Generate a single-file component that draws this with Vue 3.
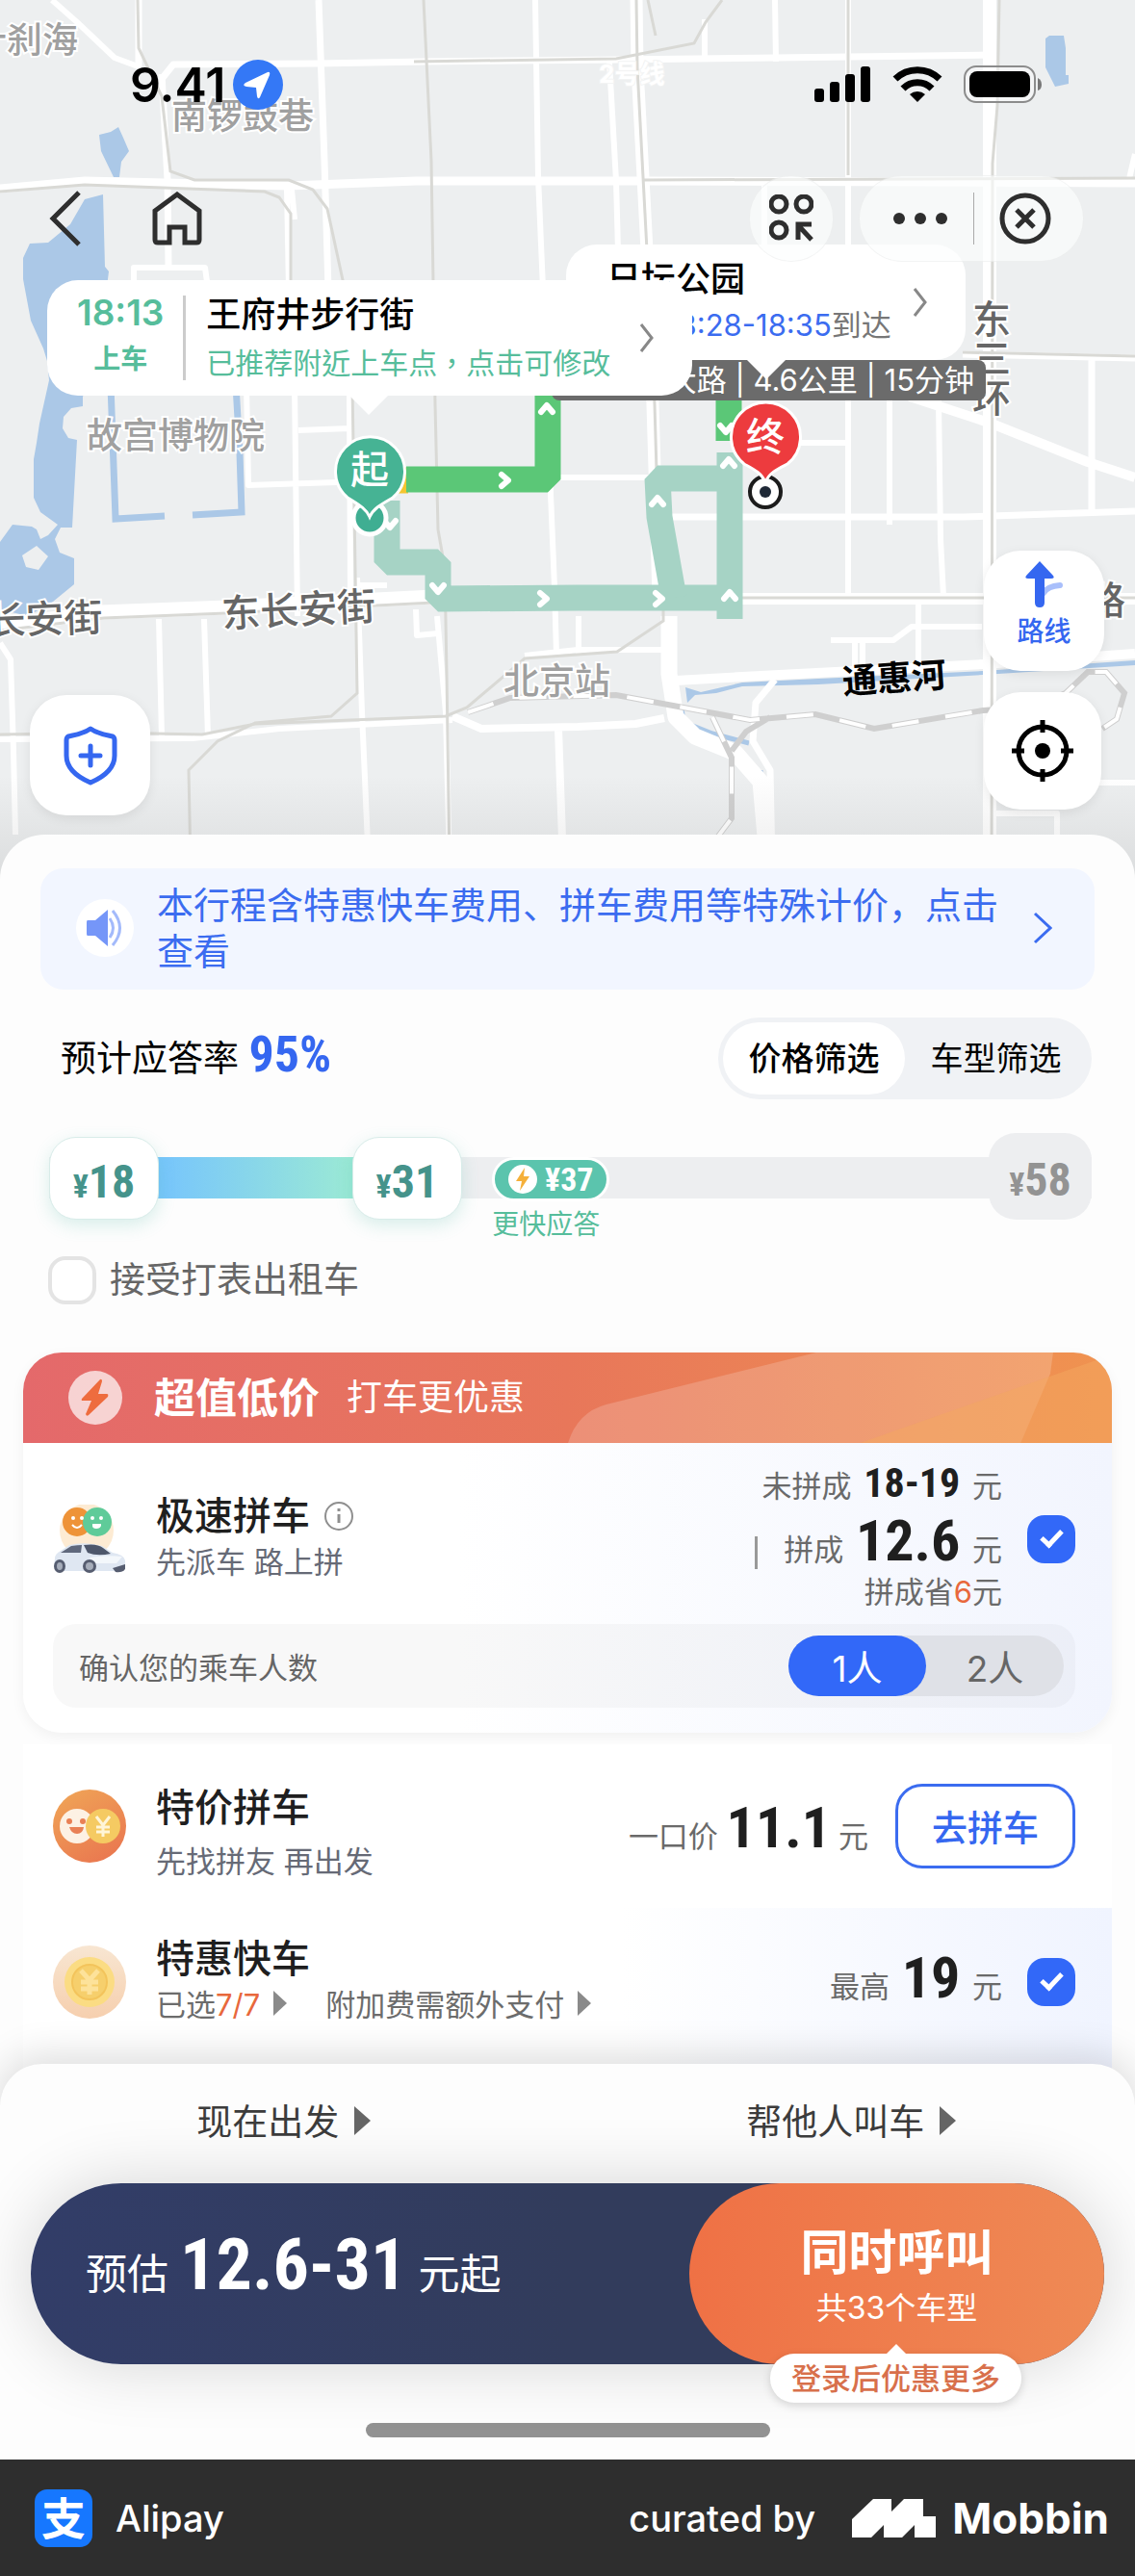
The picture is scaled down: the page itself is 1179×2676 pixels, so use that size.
<template>
  <div class="page">
    <section class="map-area">
      <svg class="map" viewBox="0 0 1179 916" preserveAspectRatio="xMidYMin slice" role="img" aria-label="路线地图">
        <rect width="1179" height="916" fill="#edeff0" />

        <!-- water -->
        <g fill="#abc8e7">
          <path d="M103 140 115 137 123 132 128 143 134 157 126 168 124 184 118 184 105 157Z" />
          <path d="M107 202 88 207 73 233 50 252 31 253 24 268V290L32 333 45 362 49 375 51 395 41 440 38 460 35 477V517L42 532 60 545 50 556 42 560 38 550 33 547 13 545 0 563V633L29 640 55 625 77 607V580L62 574 57 560 63 548H75L80 457 71 455 65 445 66 433 74 424 86 422V412L100 380 112 290 113 282 109 277Z" />
          <path d="M1086 40 1090 37H1105L1107 50V78H1110V87L1096 90 1086 70Z" />
          <path d="M712 714 728 719 771 709 850 705 1021 697 1179 686V691L1021 701 850 711 771 713 744 720 722 722 714 730Z" />
        </g>
        <path d="M23 577 38 567 50 578 40 592 27 589Z" fill="#edeff0" />
        <g fill="none" stroke="#abc8e7" stroke-width="7">
          <path d="M115 400 120 539 171 536" />
          <path d="M200 535 251 532 249 470 245 400" />
          <path d="M708 735 710 750 740 762 778 772M790 800 791 870" stroke-width="5" />
        </g>

        <!-- streets -->
        <g fill="none" stroke="#fff" stroke-width="6" stroke-linejoin="round">
          <path d="M54 0 80 23 119 60 146 70" />
          <path d="M144 0V70M168 77 174 187 175 277" stroke-width="7" />
          <path d="M168 82 180 67 330 66 440 64 640 62 806 60 1028 57" stroke-width="7" />
          <path d="M331 0 337 167 341 300" stroke-width="7" />
          <path d="M556 0 559 183 564 300" />
          <path d="M0 196 88 188 300 193 432 188H670L1179 190" stroke-width="9" />
          <path d="M303 197 306 228M298 197 300 300M139 300V278H213L216 300" />
          <path d="M256 400 258 504 350 501M306 400 309 640M310 447 363 445M363 411 364 620" />
          <path d="M165 643 168 765M212 643 216 765M0 668 11 685 14 780 16 867" />
          <path d="M0 768 200 767 290 757 470 748M432 633 433 660 455 658" />
          <path d="M371 600 376 740 383 900M454 640 463 740 467 900" />
          <path d="M570 400 572 513 576 610 578 680M560 496H680M370 608H402" />
          <path d="M470 744 500 757 600 755 660 752 690 746M580 757 585 900" stroke-width="8" />
          <path d="M545 681 600 675 690 675M601 640V680" />
          <path d="M633 65 640 188 642 260M732 20V62M805 0 806 64M794 193V260M881 193V620" />
          <path d="M881 0V186M830 460H881M924 416V545M975 416 977 560 980 620" />
          <path d="M690 537 1000 537 1179 531M1134 373V533M1000 368 1179 372" stroke-width="7" />
          <path d="M945 412 1030 440 1130 480 1179 496" stroke-width="10" />
          <path d="M661 0 662 70 672 260 678 420 684 620" stroke-width="13" />
          <path d="M1028 0V916" stroke-width="14" />
          <path d="M863 665H928L947 651H1020M954 625V695M888 665V695M896 665V695" />
          <path d="M695 640V700L702 745 722 765 764 782 790 812 796 880" stroke-width="17" />
          <path d="M702 707 790 702 1021 690 1179 679" stroke-width="10" />
          <path d="M805 706 785 730 782 770 800 800 802 900" stroke-width="7" />
          <path d="M1098 813H1179M1035 845H1098V900M1172 190 1179 160" />
          <path d="M771 622H1179" stroke-width="12" />
          <path d="M0 650 105 636 235 631 450 620" stroke-width="15" />
        </g>

        <!-- railway -->
        <path d="M486 740 530 725 640 722 710 735 779 748 847 742 908 757 1021 738 1070 735 1107 720 1130 698H1149L1168 720 1160 747 1145 757M740 745 760 787V850L745 870M760 780 775 760 800 745" fill="none" stroke="#cfcfcf" stroke-width="6" />
        <path d="M486 740 530 725 640 722 710 735 779 748 847 742 908 757 1021 738 1070 735 1107 720 1130 698H1149L1168 720 1160 747 1145 757M740 745 760 787V850L745 870" fill="none" stroke="#fff" stroke-width="4" stroke-dasharray="28 28" />

        <!-- subway lines -->
        <g fill="none" stroke="#d9d9d5" stroke-width="3">
          <path d="M143 0 144 50 168 100 177 178 202 187H300L325 197 340 217 358 300" />
          <path d="M0 199 88 192 275 199 290 205 302 222V300" />
          <path d="M430 64 640 61 721 45 733 23 750 0M673 0 681 37" />
          <path d="M440 0 448 167 452 420 455 550 462 590 464 700 467 900" />
          <path d="M366 400 371 720 344 744 265 751 226 770 196 800 198 900" />
          <path d="M0 763 110 761 210 763 265 752 463 744 485 735 545 684 641 677 689 645V610" />
          <path d="M0 655 108 642 235 637 450 626M771 621H1179M1000 366 1179 370" />
          <path d="M661 0 662 70 672 260 680 420 682 490M668 187 1179 185M881 0V182" />
          <path d="M1038 0 1036 110 1031 170 1030 916" />
        </g>

        <!-- route -->
        <g fill="none" stroke-width="27" stroke-linejoin="bevel">
          <path d="M402 520V584H455V622L600 621H757" stroke="#a6d3c5" />
          <path d="M758 643V470M758 497H683L685 537 700 621" stroke="#a6d3c5" />
          <path d="M410 499H424" stroke="#f4c52f" />
          <path d="M422 498H569V380" stroke="#5bc777" />
          <path d="M757 380V458" stroke="#5bc777" />
        </g>
        <g fill="none" stroke="#fff" stroke-width="6" stroke-linecap="round" stroke-linejoin="round">
          <path v-for="(a, i) in arrows" :key="i" d="M-6 4 0 -3 6 4" :transform="`translate(${a.x} ${a.y}) rotate(${a.r})`" />
        </g>

        <g class="labels">
          <text x="-30" y="55">什刹海</text>
          <text x="178" y="134">南锣鼓巷</text>
          <text x="90" y="466">故宫博物院</text>
          <text x="523" y="721">北京站</text>
          <text x="622" y="86" class="line-name">2号线</text>
          <text x="-13" y="659" class="road" transform="rotate(-2 0 659)">长安街</text>
          <text x="231" y="652" class="road" transform="rotate(-3 231 652)">东长安街</text>
          <text x="1129" y="638" class="road">路</text>
          <text x="1010" y="346" class="road">东</text>
          <text x="1010" y="387" class="road">三</text>
          <text x="1010" y="428" class="road">环</text>
          <text x="876" y="721" class="river" transform="rotate(-4 876 721)">通惠河</text>
        </g>

        <!-- start pin -->
        <circle cx="384" cy="538" r="17" fill="#3fae92" stroke="#fff" stroke-width="5" />
        <path d="M384 537C380 528 372 524 361 517A36 36 0 1 1 408 517C396 524 388 528 384 537Z" fill="#46b394" stroke="#fff" stroke-width="3" />
        <text class="pin-text" x="384" y="502">起</text>

        <!-- end pin -->
        <circle cx="795" cy="511" r="16" fill="#fff" stroke="#1c1c1c" stroke-width="4" />
        <circle cx="795" cy="511" r="6" fill="#1f2937" />
        <path d="M795 501C791 491 782 487 773 482A36 36 0 1 1 818 482C808 487 799 491 795 501Z" fill="#ed3b3e" stroke="#fff" stroke-width="3" />
        <text class="pin-text" x="795" y="468">终</text>
      </svg>
      <div class="map-fade"></div>

      <p class="route-info">大路 | 4.6公里 | 15分钟</p>

      <button class="place-card end-card" type="button">
        <span class="place-body">
          <span class="place-title">日坛公园</span>
          <span class="place-sub">预计<b>18:28-18:35</b>到达</span>
        </span>
        <svg class="chevron" width="16" height="32" viewBox="0 0 16 32"><path d="M2 2 13 16 2 30" /></svg>
      </button>

      <button class="place-card start-card" type="button">
        <span class="pickup">
          <span class="pickup-time">18:13</span>
          <span class="pickup-label">上车</span>
        </span>
        <span class="place-body">
          <span class="place-title">王府井步行街</span>
          <span class="place-sub tip">已推荐附近上车点，点击可修改</span>
        </span>
        <svg class="chevron" width="16" height="32" viewBox="0 0 16 32"><path d="M2 2 13 16 2 30" /></svg>
      </button>

      <header class="top">
        <div class="status">
          <div class="clock">
            <span>9.41</span>
            <svg width="52" height="52" viewBox="0 0 52 52">
              <circle cx="26" cy="26" r="26" fill="#3478f6" />
              <path d="M36 13Q39 12 38 16L28 39Q26 42 25 38L24 29 14 28Q9 27 13 24Z" fill="#fff" />
            </svg>
          </div>
          <div class="signals">
            <svg width="59" height="38" viewBox="0 0 59 38">
              <rect x="0" y="23" width="10" height="14" rx="3" />
              <rect x="16" y="16" width="10" height="21" rx="3" />
              <rect x="32" y="8" width="10" height="29" rx="3" />
              <rect x="48" y="0" width="10" height="37" rx="3" />
            </svg>
            <svg width="52" height="38" viewBox="0 0 52 38">
              <path d="M3 13A33 33 0 0 1 49 13" fill="none" stroke="#000" stroke-width="7" />
              <path d="M11 23A21 21 0 0 1 41 23" fill="none" stroke="#000" stroke-width="7" />
              <path d="M26 37 18 29A12 12 0 0 1 34 29Z" />
            </svg>
            <svg width="82" height="40" viewBox="0 0 82 40">
              <rect x="1" y="1" width="73" height="37" rx="12" fill="#fff" fill-opacity=".4" stroke="#8c8c8c" stroke-width="2" />
              <rect x="6" y="6" width="63" height="27" rx="8" />
              <path d="M77 13Q81 15 81 20T77 26Z" fill="#777" />
            </svg>
          </div>
        </div>
        <nav class="nav">
          <button class="plain" type="button" aria-label="返回">
            <svg width="34" height="58" viewBox="0 0 34 58"><path d="M31 2 4 29 31 56" class="line" /></svg>
          </button>
          <button class="plain home" type="button" aria-label="首页">
            <svg width="54" height="56" viewBox="0 0 54 56"><path d="M27 3 50 20V50Q50 53 47 53H35V37H19V53H7Q4 53 4 50V20Z" class="line" /></svg>
          </button>
          <button class="glass round" type="button" aria-label="小程序">
            <svg width="46" height="50" viewBox="0 0 46 50">
              <circle cx="10" cy="10" r="8" class="line" />
              <circle cx="36" cy="10" r="8" class="line" />
              <circle cx="10" cy="37" r="8" class="line" />
              <path d="M44 47 31 33M30 47V31H44" class="line" />
            </svg>
          </button>
          <div class="glass pill">
            <button class="plain" type="button" aria-label="更多">
              <svg width="58" height="14" viewBox="0 0 58 14"><circle cx="7" cy="7" r="6" /><circle cx="29" cy="7" r="6" /><circle cx="51" cy="7" r="6" /></svg>
            </button>
            <i></i>
            <button class="plain" type="button" aria-label="关闭">
              <svg width="54" height="54" viewBox="0 0 54 54"><circle cx="27" cy="27" r="24" class="line" /><path d="M18 18 36 36M36 18 18 36" class="line" /></svg>
            </button>
          </div>
        </nav>
      </header>

      <button class="map-btn safety" type="button" aria-label="安全中心">
        <svg width="56" height="62" viewBox="0 0 56 62" fill="none" stroke="#3567f0" stroke-width="5" stroke-linecap="round" stroke-linejoin="round">
          <path d="M28 3C35 8 42 9 51 11Q53 12 53 15V31C53 45 42 53 28 59 14 53 3 45 3 31V15Q3 12 5 11C14 9 21 8 28 3Z" />
          <path d="M28 21V41M18 31H38" />
        </svg>
      </button>
      <div class="map-tools">
        <button class="map-btn route" type="button">
          <svg width="42" height="50" viewBox="0 0 42 50">
            <path d="M20 34Q24 27 37 26" fill="none" stroke="#a9bffb" stroke-width="6" stroke-linecap="round" />
            <path d="M16 1 30 16Q32 19 28 19H21V44Q21 49 16 49T11 44V19H4Q0 19 2 16Z" fill="#3567f0" />
          </svg>
          路线
        </button>
        <button class="map-btn locate" type="button" aria-label="定位">
          <svg width="64" height="64" viewBox="0 0 64 64" fill="none" stroke="#000" stroke-width="5">
            <circle cx="32" cy="32" r="25" />
            <circle cx="32" cy="32" r="8" fill="#000" stroke="none" />
            <path d="M32 0V13M32 51V64M0 32H13M51 32H64" />
          </svg>
        </button>
      </div>
    </section>

    <main class="sheet">
      <a class="notice" href="#">
        <svg width="60" height="60" viewBox="0 0 60 60">
          <circle cx="30" cy="30" r="30" fill="#fff" />
          <path d="M12 22H20L33 11V49L20 38H12Q11 38 11 36V24Q11 22 12 22Z" fill="#7596f8" />
          <path d="M35 20Q42 30 35 40M38 12Q53 30 38 48" fill="none" stroke="#a3bafb" stroke-width="3" />
        </svg>
        <span>本行程含特惠快车费用、拼车费用等特殊计价，点击查看</span>
        <svg class="chevron blue" width="20" height="34" viewBox="0 0 20 34"><path d="M2 2 18 17 2 32" /></svg>
      </a>

      <div class="filter-row">
        <p>预计应答率 <b class="num">95%</b></p>
        <div class="segment">
          <button v-for="f in filters" :key="f" type="button" :class="{ active: filter === f }" @click="filter = f">{{ f }}</button>
        </div>
      </div>

      <div class="price-range">
        <div class="rail"></div>
        <div class="rail-fill" :style="{ left: pos(low), width: `calc(${pos(high)} - ${pos(low)})` }"></div>
        <span class="max num"><small>¥</small>58</span>
        <span class="faster" :style="{ left: pos(37) }">
          <span class="faster-tag num">
            <svg width="30" height="30" viewBox="0 0 30 30"><circle cx="15" cy="15" r="15" fill="#fff" /><path d="M17 3 8 17H14L12 27 22 12H16Z" fill="#f5b03a" /></svg>
            ¥37
          </span>
          <span class="faster-label">更快应答</span>
        </span>
        <input v-model.number="low" type="range" min="18" max="58" aria-label="最低价格" />
        <input v-model.number="high" type="range" min="18" max="58" aria-label="最高价格" />
        <output class="num" :style="{ left: pos(low) }"><small>¥</small>{{ low }}</output>
        <output class="num" :style="{ left: pos(high) }"><small>¥</small>{{ high }}</output>
      </div>

      <label class="taxi"><input v-model="taxi" type="checkbox" />接受打表出租车</label>

      <section class="deal">
        <header class="deal-head">
          <svg class="deal-art" viewBox="0 0 570 94" preserveAspectRatio="none">
            <path d="M0 94Q10 62 40 54L260 0H508L505 22 474 94Z" fill="#fff" fill-opacity=".18" />
            <path d="M306 94 570 2V94Z" fill="#f4a860" fill-opacity=".5" />
          </svg>
          <svg width="56" height="56" viewBox="0 0 56 56"><circle cx="28" cy="28" r="28" fill="#fff" fill-opacity=".7" /><path d="M33 9 14 29Q13 31 15 31H24L18 45Q19 48 21 46L41 27Q42 24 40 24H31L35 11Q35 8 33 9Z" fill="#ee6c3e" /></svg>
          <h2>超值低价</h2>
          <span>打车更优惠</span>
        </header>

        <div class="ride pool">
          <svg class="ride-icon" width="76" height="72" viewBox="0 0 76 72">
            <circle cx="35" cy="27" r="28" fill="#fdebd3" />
            <circle cx="25" cy="18" r="15" fill="#ee9338" />
            <circle cx="46" cy="18" r="15" fill="#5fcb99" />
            <g fill="#fff"><circle cx="21" cy="14" r="2" /><circle cx="30" cy="14" r="2" /><circle cx="41" cy="14" r="2" /><circle cx="50" cy="14" r="2" /><path d="M41 20H50V22Q49 25 45 25T41 22Z" /></g>
            <path d="M20 21Q25 27 30 21" fill="none" stroke="#fff" stroke-width="2" />
            <path d="M2 56Q2 51 8 48L17 42Q34 38 51 43L62 50Q74 52 75 58V66L68 69H8L1 65Z" fill="#dfe7f2" />
            <path d="M8 50 19 43Q26 42 30 42L29 50Z" fill="#5f687c" />
            <path d="M32 42Q46 40 52 45L60 51Q46 54 36 50Z" fill="#4e576b" />
            <path d="M38 55Q56 52 72 54L66 61H42Z" fill="#f3f7fb" />
            <ellipse cx="7" cy="64" rx="6" ry="7" fill="#565d70" /><ellipse cx="38" cy="64" rx="7" ry="7" fill="#565d70" />
            <ellipse cx="7" cy="64" rx="3" ry="4" fill="#a6adba" /><ellipse cx="38" cy="64" rx="4" ry="4" fill="#a6adba" />
            <path d="M62 66 75 62V67Q72 71 65 70Z" fill="#565d70" />
          </svg>
          <div class="ride-name">
            <h3>极速拼车
              <svg width="32" height="32" viewBox="0 0 32 32" fill="none" stroke="#8f8f8f"><circle cx="16" cy="16" r="14" stroke-width="2" /><path d="M16 14V23M16 8V11" stroke-width="3" /></svg>
            </h3>
            <p>先派车 路上拼</p>
          </div>
          <div class="prices">
            <p class="price">未拼成 <b class="num small">18-19</b> 元</p>
            <p class="price main"><i></i>拼成 <b class="num">12.6</b> 元</p>
            <p class="price save">拼成省<em>6</em>元</p>
          </div>
          <input v-model="pool" class="tick" type="checkbox" aria-label="极速拼车" />
        </div>

        <div class="people">
          <span>确认您的乘车人数</span>
          <div class="people-switch">
            <button v-for="n in 2" :key="n" type="button" :class="{ active: people === n }" @click="people = n">{{ n }}人</button>
          </div>
        </div>
      </section>

      <section class="rides">
        <div class="ride bargain">
          <svg class="ride-icon" width="76" height="76" viewBox="0 0 76 76">
            <defs><linearGradient id="bargain" x1="0" y1="0" x2=".6" y2="1"><stop offset="0" stop-color="#f0a757" /><stop offset="1" stop-color="#ea7a50" /></linearGradient></defs>
            <circle cx="38" cy="38" r="38" fill="url(#bargain)" />
            <circle cx="25" cy="38" r="18" fill="#fdf1e4" />
            <circle cx="17" cy="33" r="3" fill="#e98055" /><circle cx="31" cy="33" r="3" fill="#e98055" />
            <path d="M17 39H32Q31 46 25 46T17 39Z" fill="#e98055" />
            <circle cx="52" cy="38" r="18" fill="#f5ca62" />
            <path d="M45 28 52 37 59 28M52 37V49M45 39H59M45 44H59" fill="none" stroke="#fff5d8" stroke-width="3" />
          </svg>
          <div class="ride-name">
            <h3>特价拼车</h3>
            <p>先找拼友 再出发</p>
          </div>
          <p class="price tight">一口价 <b class="num">11.1</b>元</p>
          <button class="go" type="button">去拼车</button>
        </div>

        <div class="ride express">
          <svg class="ride-icon" width="76" height="76" viewBox="0 0 76 76">
            <defs><linearGradient id="coin" x1="0" y1="0" x2="0" y2="1"><stop offset="0" stop-color="#f8e6d2" /><stop offset="1" stop-color="#f6cfae" /></linearGradient></defs>
            <circle cx="38" cy="38" r="38" fill="url(#coin)" />
            <circle cx="38" cy="38" r="26" fill="#fbdc83" />
            <circle cx="38" cy="38" r="18" fill="#f6cf6c" stroke="#f3c45b" stroke-width="2" />
            <path d="M29 26 38 36 47 26M38 36V51M29 38H47M29 45H47" fill="none" stroke="#fde29a" stroke-width="5" />
          </svg>
          <div class="ride-name">
            <h3>特惠快车</h3>
            <div class="links">
              <a href="#">已选<em>7/7</em><i class="tri"></i></a>
              <a href="#">附加费需额外支付<i class="tri"></i></a>
            </div>
          </div>
          <p class="price">最高 <b class="num">19</b> 元</p>
          <input v-model="express" class="tick" type="checkbox" aria-label="特惠快车" />
        </div>
      </section>
    </main>

    <section class="order">
      <div class="options">
        <button type="button">现在出发<i class="tri"></i></button>
        <button type="button">帮他人叫车<i class="tri"></i></button>
      </div>
      <div class="cta">
        <p class="estimate">预估 <b class="num">12.6-31</b> 元起</p>
        <button class="call" type="button">
          <strong>同时呼叫</strong>
          <span>共33个车型</span>
        </button>
        <span class="bubble">登录后优惠更多</span>
      </div>
      <div class="home-bar"></div>
    </section>

    <footer class="credit">
      <span class="alipay">支</span>
      <span>Alipay</span>
      <span class="by">curated by</span>
      <svg width="88" height="40" viewBox="0 0 88 40" fill="#fff"><path d="M0 21 22 0H41V13L54 0H74V18H87V40H65V27L52 40H33V27L20 40H0Z" /></svg>
      <strong>Mobbin</strong>
    </footer>
  </div>
</template>

<script setup>
import { ref } from 'vue'

const filters = ['价格筛选', '车型筛选']
const filter = ref('价格筛选')
const low = ref(18)
const high = ref(31)
const taxi = ref(false)
const pool = ref(true)
const express = ref(true)
const people = ref(1)

// direction arrows along the route
const arrows = [
  { x: 525, y: 499, r: 90 },
  { x: 568, y: 424, r: 0 },
  { x: 405, y: 545, r: 180 },
  { x: 455, y: 612, r: 180 },
  { x: 565, y: 622, r: 90 },
  { x: 685, y: 622, r: 90 },
  { x: 758, y: 618, r: 0 },
  { x: 683, y: 520, r: 0 },
  { x: 757, y: 480, r: 0 },
  { x: 754, y: 446, r: 180 }
]

// left edge of a 114px wide thumb for a price between 18 and 58
const pos = (price) => `calc((100% - 114px) * ${(price - 18) / 40})`
</script>

<style>
body {
  margin: 0;
  background: #fdfdfd;
}
</style>

<style scoped>
.page {
  font-family: Inter, "Noto Sans CJK SC", sans-serif;
  color: #1c1c1c;
  display: flex;
  flex-direction: column;
  overflow: hidden;
}

.page *,
.page *::before,
.page *::after {
  box-sizing: border-box;
}

p,
h2,
h3 {
  margin: 0;
}

button {
  font: inherit;
  color: inherit;
  border: 0;
  padding: 0;
  background: none;
  cursor: pointer;
}

a {
  color: inherit;
  text-decoration: none;
}

em {
  font-style: normal;
  color: #e8683c;
}

svg {
  flex: none;
  display: block;
}

.num {
  font-family: "Liberation Sans Narrow", "Roboto Condensed", "Open Sans Condensed", Roboto, sans-serif;
  font-weight: 700;
}

.tri {
  display: inline-block;
  border-left: 14px solid #8a8a8a;
  border-top: 13px solid transparent;
  border-bottom: 13px solid transparent;
}

/* map */
.map-area {
  position: relative;
  height: 916px;
}

.map {
  position: absolute;
  inset: 0;
  width: 100%;
  height: 100%;
}

.map-fade {
  position: absolute;
  left: 0;
  right: 0;
  bottom: 0;
  height: 110px;
  background: linear-gradient(rgba(120, 120, 120, 0), rgba(120, 120, 120, 0.16));
}

.labels {
  font-size: 37px;
  font-weight: 500;
  fill: #a0a0a0;
  stroke: #fff;
  stroke-width: 4px;
  paint-order: stroke;
}

.labels .road {
  font-size: 40px;
  fill: #666;
}

.labels .line-name {
  font-size: 26px;
  font-weight: 700;
  fill: #fff;
  stroke: #f3f4f4;
  stroke-width: 2px;
}

.labels .river {
  font-size: 36px;
  font-weight: 700;
  fill: #000;
  stroke: none;
}

.pin-text {
  font-size: 40px;
  font-weight: 500;
  fill: #fff;
  text-anchor: middle;
}

.route-info {
  position: absolute;
  left: 573px;
  top: 374px;
  width: 451px;
  padding-right: 12px;
  border-radius: 8px;
  background: #6b6b6b;
  color: #fff;
  font-size: 31px;
  line-height: 42px;
  text-align: right;
}

.place-card {
  position: absolute;
  display: flex;
  align-items: center;
  height: 120px;
  border-radius: 32px;
  background: #fff;
  text-align: left;
}

.place-card::after {
  content: "";
  position: absolute;
  top: 100%;
  border: 20px solid transparent;
  border-top-color: #fff;
  border-bottom: 0;
}

.start-card {
  left: 49px;
  top: 291px;
  width: 670px;
  padding: 0 39px 0 31px;
}

.start-card::after {
  left: 314px;
}

.end-card {
  left: 588px;
  top: 254px;
  width: 415px;
  padding: 0 39px 0 42px;
}

.end-card::after {
  left: 188px;
}

.place-body {
  flex: 1;
  display: flex;
  flex-direction: column;
}

.place-title {
  font-size: 36px;
  font-weight: 500;
  line-height: 48px;
  color: #000;
}

.place-sub {
  font-size: 31px;
  line-height: 48px;
  color: #777;
  white-space: nowrap;
}

.place-sub b {
  font-weight: 400;
  color: #3b6cf0;
}

.place-sub.tip {
  font-family: "Noto Sans CJK TC", sans-serif;
  font-size: 30px;
  color: #56bd9b;
}

.pickup {
  display: flex;
  flex-direction: column;
  align-items: center;
  padding-right: 20px;
  margin-right: 21px;
  border-right: 3px solid #ccc;
  color: #56bd9b;
}

.pickup-time {
  font-size: 37px;
  font-weight: 600;
  line-height: 36px;
}

.pickup-label {
  margin-top: 8px;
  font-size: 28px;
  font-weight: 700;
  line-height: 44px;
}

.chevron {
  fill: none;
  stroke: #888;
  stroke-width: 3;
}

.chevron.blue {
  stroke: #3b6cf0;
}

.top {
  position: relative;
  padding: 62px 53px 0 51px;
}

.status {
  display: flex;
  align-items: center;
  justify-content: space-between;
  height: 52px;
  padding: 0 43px 0 84px;
}

.clock {
  display: flex;
  align-items: center;
  gap: 8px;
  font-size: 50px;
  font-weight: 600;
  color: #000;
}

.signals {
  display: flex;
  align-items: center;
  gap: 22px;
}

.nav {
  display: flex;
  align-items: center;
  height: 90px;
  margin-top: 68px;
}

.line {
  fill: none;
  stroke: #2e2e2e;
  stroke-width: 5;
}

.home {
  margin: 0 auto 0 72px;
}

.glass {
  display: flex;
  align-items: center;
  justify-content: center;
  height: 90px;
  border: 1px solid rgba(0, 0, 0, 0.04);
  border-radius: 45px;
  background: rgba(252, 253, 254, 0.65);
}

.round {
  width: 88px;
  margin-right: 26px;
}

.pill {
  width: 234px;
  gap: 26px;
  fill: #2e2e2e;
}

.pill i {
  width: 1px;
  height: 54px;
  background: #aaa;
}

.map-btn {
  display: flex;
  flex-direction: column;
  align-items: center;
  justify-content: center;
  width: 125px;
  height: 125px;
  border-radius: 38px;
  background: #fff;
  box-shadow: 0 3px 12px rgba(0, 0, 0, 0.08);
}

.safety {
  position: absolute;
  left: 31px;
  top: 722px;
}

.map-tools {
  position: absolute;
  right: 32px;
  top: 572px;
  display: flex;
  flex-direction: column;
  gap: 22px;
}

.map-btn.route {
  gap: 4px;
  padding-bottom: 12px;
  font-size: 28px;
  font-weight: 500;
  line-height: 40px;
  color: #3567f0;
}

.map-btn.locate {
  width: 122px;
  height: 122px;
}

/* sheet */
.sheet {
  position: relative;
  margin-top: -49px;
  padding: 35px 24px 0;
  border-radius: 46px 46px 0 0;
  background: #fdfdfd;
}

.notice {
  display: flex;
  align-items: center;
  gap: 24px;
  margin: 0 18px;
  padding: 14px 44px 16px 37px;
  border-radius: 24px;
  background: #f2f6ff;
  color: #3b6cf0;
  font-size: 38px;
  line-height: 48px;
}

.notice span {
  flex: 1;
}

.notice .chevron {
  margin-left: -10px;
}

.filter-row {
  display: flex;
  align-items: center;
  justify-content: space-between;
  margin: 29px 21px 0 39px;
  font-size: 37px;
  line-height: 74px;
  color: #000;
}

.filter-row b {
  font-size: 52px;
  line-height: 0;
  color: #3567f0;
}

.segment {
  display: flex;
  padding: 5px;
  border-radius: 43px;
  background: #f0f2f5;
  font-size: 34px;
}

.segment button {
  width: 189px;
  height: 75px;
  border-radius: 38px;
}

.segment .active {
  background: #fff;
  font-weight: 500;
}

.price-range {
  position: relative;
  display: flex;
  justify-content: flex-end;
  height: 90px;
  margin: 35px 21px 0 27px;
  color: #45938b;
  font-size: 48px;
}

.rail,
.rail-fill {
  position: absolute;
  top: 25px;
  height: 43px;
}

.rail {
  left: 0;
  right: 0;
  background: #edeef0;
}

.rail-fill {
  margin-left: 57px;
  background: linear-gradient(90deg, #78c6fb 20%, #9ae8d6 80%);
}

.price-range small {
  font-size: 34px;
}

.max {
  position: relative;
  width: 107px;
  border-radius: 28px;
  background: #edeef0;
  color: #939393;
  line-height: 98px;
  text-align: center;
}

.price-range input {
  appearance: none;
  position: absolute;
  top: 4px;
  left: 0;
  width: 100%;
  height: 86px;
  margin: 0;
  background: none;
  pointer-events: none;
}

.price-range input::-webkit-slider-thumb {
  appearance: none;
  width: 114px;
  height: 86px;
  border: 1px solid #d8ece9;
  border-radius: 28px;
  background: #fff;
  box-shadow: 0 6px 18px rgba(70, 180, 160, 0.2);
  pointer-events: auto;
}

.price-range output {
  position: absolute;
  top: 4px;
  width: 114px;
  line-height: 94px;
  text-align: center;
  pointer-events: none;
}

.faster {
  position: absolute;
  top: 25px;
  width: 122px;
  display: flex;
  flex-direction: column;
}

.faster-tag {
  display: flex;
  align-items: center;
  justify-content: center;
  gap: 8px;
  width: 122px;
  height: 46px;
  border: 3px solid #fff;
  border-radius: 23px;
  background: #5bc4ad;
  color: #fff;
  font-size: 34px;
}

.faster-label {
  font-size: 28px;
  line-height: 48px;
  color: #56bd9b;
  white-space: nowrap;
}

.taxi {
  display: flex;
  align-items: center;
  gap: 14px;
  width: max-content;
  margin: 38px 0 0 26px;
  font-size: 37px;
  line-height: 50px;
  color: #666;
}

.taxi input {
  appearance: none;
  width: 50px;
  height: 50px;
  margin: 0;
  border: 4px solid #e4e4e4;
  border-radius: 18px;
  background: #fff;
}

.deal {
  margin-top: 50px;
  border-radius: 40px;
  overflow: hidden;
  background: linear-gradient(90deg, #fff 40%, #f2f5fe);
  box-shadow: 0 4px 14px rgba(0, 0, 0, 0.05);
  padding-bottom: 26px;
}

.deal-head {
  position: relative;
  display: flex;
  align-items: center;
  height: 94px;
  padding-left: 47px;
  background: linear-gradient(90deg, #e4696b, #e8775a 50%, #f09350);
  color: #fff;
  font-size: 37px;
  line-height: 56px;
}

.deal-art {
  position: absolute;
  right: 0;
  top: 0;
  width: 50%;
  height: 100%;
}

.deal-head h2 {
  margin: 0 28px 0 33px;
  font-size: 43px;
  font-weight: 700;
}

.ride {
  display: flex;
  align-items: center;
  height: 188px;
  padding: 0 38px 0 31px;
}

.pool {
  padding-top: 12px;
}

.ride-name {
  margin: 0 auto 0 31px;
}

.ride-name h3 {
  display: flex;
  align-items: center;
  gap: 14px;
  font-size: 40px;
  font-weight: 500;
  line-height: 48px;
  color: #1f1f1f;
}

.ride-name p,
.links {
  font-size: 31px;
  line-height: 48px;
  color: #666a76;
}

.links {
  display: flex;
  gap: 40px;
  color: #6c6c6c;
}

.links .tri {
  margin-left: 14px;
}

.prices {
  display: flex;
  flex-direction: column;
  align-items: flex-end;
}

.price {
  font-size: 31px;
  line-height: 44px;
  color: #6a6a6a;
  white-space: nowrap;
}

.price b {
  margin: 0 4px;
  font-size: 60px;
  line-height: 0;
  color: #1f1f1f;
}

.price b.small {
  font-size: 42px;
}

.price i {
  display: inline-block;
  width: 3px;
  height: 34px;
  margin-right: 27px;
  vertical-align: middle;
  background: #999;
}

.price.main {
  margin-top: 22px;
}

.tick {
  appearance: none;
  flex: none;
  width: 50px;
  height: 50px;
  margin: 0 0 0 26px;
  border: 3px solid #d8d8d8;
  border-radius: 18px;
  display: grid;
  place-items: center;
}

.tick:checked {
  border: 0;
  background: #3268f8;
}

.tick:checked::after {
  content: "";
  width: 13px;
  height: 22px;
  margin-top: -6px;
  border: solid #fff;
  border-width: 0 5px 5px 0;
  transform: rotate(43deg);
}

.people {
  display: flex;
  align-items: center;
  justify-content: space-between;
  height: 87px;
  margin: 0 38px 0 31px;
  padding: 0 12px 0 27px;
  border-radius: 24px;
  background: rgba(120, 120, 120, 0.05);
  font-size: 31px;
  color: #666;
}

.people-switch {
  display: flex;
  border-radius: 32px;
  background: #dfe1e7;
  font-size: 37px;
}

.people-switch button {
  width: 143px;
  height: 63px;
  border-radius: 32px;
}

.people-switch .active {
  background: #3268f8;
  color: #fff;
}

.rides {
  margin-top: 12px;
  background: #fff;
}

.bargain {
  height: 170px;
}

.bargain .ride-name {
  padding-top: 18px;
}

.bargain .ride-name p {
  margin-top: 8px;
}

.bargain .price {
  padding-top: 22px;
}

.price.tight b {
  margin: 0 8px 0 0;
}

.go {
  width: 187px;
  height: 88px;
  margin-left: 28px;
  border: 3px solid #3b6cf0;
  border-radius: 28px;
  color: #3567f0;
  font-size: 37px;
  font-weight: 500;
}

.express {
  height: 198px;
  padding-bottom: 44px;
  background: linear-gradient(90deg, #fff 55%, #f0f4ff);
}

.express .price {
  padding-top: 10px;
}

/* order */
.order {
  position: relative;
  margin-top: -36px;
  padding: 24px 32px 23px;
  border-radius: 44px 44px 0 0;
  background: #fdfdfd;
  box-shadow: 0 -8px 40px rgba(0, 0, 0, 0.14);
}

.options {
  display: flex;
  margin: 0 -32px;
  font-size: 37px;
  color: #3c3c3c;
}

.options button {
  flex: 1;
  line-height: 74px;
}

.options .tri {
  margin-left: 16px;
  border-left: 17px solid #666;
  border-top-width: 15px;
  border-bottom-width: 15px;
}

.cta {
  position: relative;
  display: flex;
  justify-content: space-between;
  height: 188px;
  margin-top: 26px;
  border-radius: 94px;
  background: linear-gradient(90deg, #323d68, #323c5c 50%);
  box-shadow: 0 0 70px rgba(0, 0, 0, 0.16);
  color: #fff;
}

.estimate {
  padding-left: 57px;
  font-size: 43px;
  line-height: 188px;
  white-space: nowrap;
}

.estimate b {
  font-size: 74px;
  line-height: 0;
}

.call {
  display: flex;
  flex-direction: column;
  align-items: center;
  width: 431px;
  padding-top: 40px;
  border-radius: 94px;
  background: linear-gradient(90deg, #ef7145, #ef8a55);
  font-size: 32px;
  line-height: 52px;
}

.call strong {
  font-size: 50px;
  font-weight: 700;
  line-height: 64px;
}

.bubble {
  position: absolute;
  right: 86px;
  bottom: -40px;
  padding: 0 22px;
  border-radius: 25px;
  background: #fff;
  box-shadow: 0 3px 10px rgba(0, 0, 0, 0.15);
  color: #d8704b;
  font-size: 31px;
  font-weight: 500;
  line-height: 51px;
}

.bubble::before {
  content: "";
  position: absolute;
  left: 50%;
  bottom: 100%;
  margin-left: -10px;
  border: 10px solid transparent;
  border-top: 0;
  border-bottom-color: #fff;
}

.home-bar {
  width: 420px;
  height: 15px;
  margin: 61px auto 0;
  border-radius: 8px;
  background: #929292;
}

.credit {
  position: relative;
  display: flex;
  align-items: center;
  height: 121px;
  padding: 0 27px 0 36px;
  background: #2e2e2e;
  color: #fff;
  font-size: 38px;
  font-weight: 500;
}

.alipay {
  width: 60px;
  margin-right: 24px;
  border-radius: 13px;
  background: #1677ff;
  font-size: 46px;
  font-weight: 700;
  line-height: 60px;
  text-align: center;
}

.by {
  margin: 0 38px 0 auto;
}

.credit strong {
  margin-left: 16px;
  font-size: 44px;
  font-weight: 700;
}
</style>
